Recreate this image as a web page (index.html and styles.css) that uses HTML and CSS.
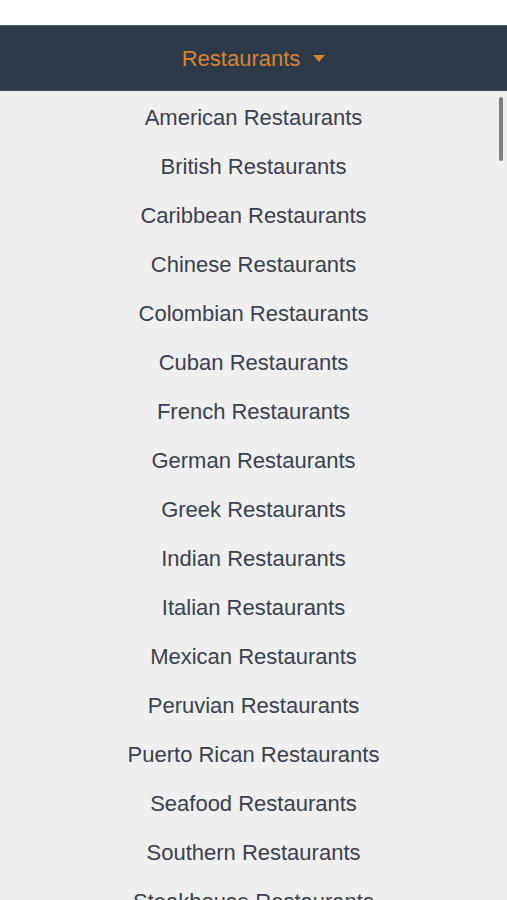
FILE: index.html
```html
<!DOCTYPE html>
<html lang="en">
<head>
    <meta charset="UTF-8">
    <meta name="viewport" content="width=device-width, initial-scale=1.0">
    <title>Restaurants</title>
    <link rel="stylesheet" href="styles.css">
</head>
<body>
    <div class="topbar"></div>
    <header class="nav">
        <button type="button" class="nav-toggle">
            Restaurants
            <svg class="caret" width="12" height="7" viewBox="0 0 12 7"><path d="M0 0h12L6 7z" fill="#d9832e"/></svg>
        </button>
    </header>
    <div class="menu">
        <ul class="menu-list">
            <li>American Restaurants</li>
            <li>British Restaurants</li>
            <li>Caribbean Restaurants</li>
            <li>Chinese Restaurants</li>
            <li>Colombian Restaurants</li>
            <li>Cuban Restaurants</li>
            <li>French Restaurants</li>
            <li>German Restaurants</li>
            <li>Greek Restaurants</li>
            <li>Indian Restaurants</li>
            <li>Italian Restaurants</li>
            <li>Mexican Restaurants</li>
            <li>Peruvian Restaurants</li>
            <li>Puerto Rican Restaurants</li>
            <li>Seafood Restaurants</li>
            <li>Southern Restaurants</li>
            <li>Steakhouse Restaurants</li>
        </ul>
        <div class="scrollbar"></div>
    </div>
</body>
</html>
```

FILE: styles.css
```css
html, body {
    height: 100%;
}
body {
    font-family: "Liberation Sans", Arial, sans-serif;
    margin: 0;
    padding: 0;
    background-color: #ffffff;
    overflow: hidden;
}
.topbar {
    height: 25px;
    background-color: #ffffff;
}
.nav {
    height: 65px;
    background-color: #2c3a4a;
    border-top: 1px solid #56657a;
    box-sizing: border-box;
    display: flex;
    align-items: center;
    justify-content: center;
}
.nav-toggle {
    background: none;
    border: none;
    padding: 0;
    margin-top: 2px;
    font-family: inherit;
    font-size: 22px;
    color: #d9832e;
    display: flex;
    align-items: center;
    gap: 13px;
    cursor: pointer;
}
.caret {
    margin-top: -1px;
}
.menu {
    position: relative;
    background-color: #efefef;
    border-top: 1px solid #3e4b5c;
    min-height: 900px;
}
.menu-list {
    list-style: none;
    margin: 0;
    padding: 2px 0 0;
}
.menu-list li {
    height: 49px;
    line-height: 49px;
    text-align: center;
    font-size: 22px;
    color: #3a4150;
}
.scrollbar {
    position: absolute;
    top: 6px;
    right: 4px;
    width: 4px;
    height: 64px;
    border-radius: 2px;
    background-color: #7d7d7d;
}
```
